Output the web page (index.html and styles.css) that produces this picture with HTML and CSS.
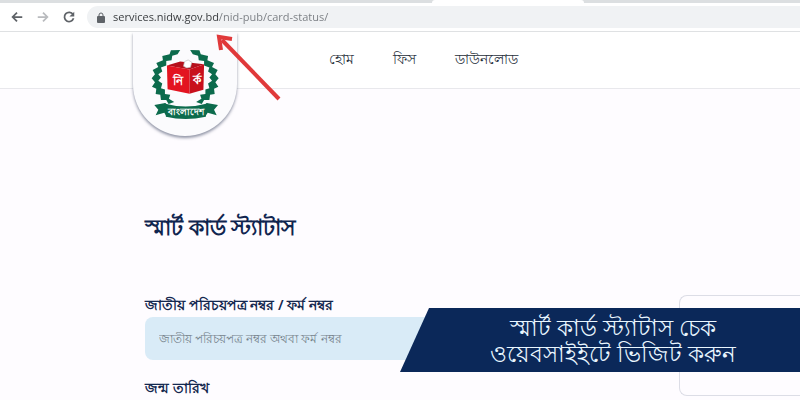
FILE: index.html
```html
<!DOCTYPE html>
<html lang="bn">

<head>
    <meta charset="UTF-8">
    <meta name="viewport" content="width=device-width, initial-scale=1.0">
    <title>স্মার্ট কার্ড স্ট্যাটাস</title>
    <link rel="stylesheet" href="styles.css">
</head>

<body>

    <div class="browser">
        <div class="tab-strip">
            <div class="tab"></div>
        </div>
        <div class="toolbar">
            <button class="tool" type="button" aria-label="Back">
                <svg viewBox="0 0 16 16"><path d="M14 8H3M8 3L3 8l5 5" /></svg>
            </button>
            <button class="tool forward" type="button" aria-label="Forward">
                <svg viewBox="0 0 16 16"><path d="M2 8h11M8 3l5 5-5 5" /></svg>
            </button>
            <button class="tool" type="button" aria-label="Reload">
                <svg viewBox="0 0 16 16"><path d="M12.6 5A5.3 5.3 0 1 0 13.2 9.5" /><path class="solid" d="M14 2v5.500H8.500z" /></svg>
            </button>
            <div class="address">
                <svg class="lock" viewBox="0 0 8 11"><path d="M2 5V3a2 2 0 0 1 4 0v2" /><rect x="0" y="4" width="8" height="7" rx="1" /></svg>
                <input class="url" type="text" aria-label="Address" value="services.nidw.gov.bd/nid-pub/card-status/">
            </div>
        </div>
    </div>

    <header class="header">
        <a class="badge" href="#" aria-label="বাংলাদেশ নির্বাচন কমিশন">
            <svg class="logo" viewBox="92 70 208 212">
                <defs>
                    <path id="laurel" d="M180 75L152 76 148 88 126 93 128 106 108 114 114 126 97 135 104 148 94 160 104 172 95 186 108 192 106 208 120 210 122 226 138 226 145 238 162 232 146 222 150 210 134 208 134 194 122 190 126 176 114 168 122 158 114 148 126 140 122 128 138 122 138 108 154 106 156 92 172 88z" />
                </defs>
                <use href="#laurel" fill="#0c6b4c" />
                <use href="#laurel" fill="#0c6b4c" transform="translate(390 0) scale(-1 1)" />
                <path fill="#b5101b" d="M140 122L180 110 252 118 208 134z" />
                <path fill="#e31420" d="M140 122L208 134V207L142 193z" />
                <path fill="#c8101c" d="M208 134L252 118 250 195 208 207z" />
                <path fill="#fff" stroke="#bbb" stroke-width="2" d="M190 124L193 110 204 105 215 112 211 127 200 129z" />
                <text x="174" y="180" class="logo-text box-text">নি</text>
                <text x="230" y="177" class="logo-text box-text">র্ক</text>
                <path fill="#0c6b4c" d="M102 241L135 235 150 248 140 276 132 264 106 272 114 255zM294 241L260 235 245 248 255 276 263 264 290 272 282 255z" />
                <path fill="#0c6b4c" d="M132 236Q196 254 262 236L257 276Q196 290 137 276z" />
                <text x="197" y="270" class="logo-text ribbon-text">বাংলাদেশ</text>
            </svg>
        </a>
        <nav class="nav">
            <a href="#">হোম</a>
            <a href="#">ফিস</a>
            <a href="#">ডাউনলোড</a>
        </nav>
    </header>

    <main class="content">
        <form class="status-form">
            <h1>স্মার্ট কার্ড স্ট্যাটাস</h1>
            <label for="nid">জাতীয় পরিচয়পত্র নম্বর / ফর্ম নম্বর</label>
            <input id="nid" class="field" type="text" placeholder="জাতীয় পরিচয়পত্র নম্বর অথবা ফর্ম নম্বর">
            <p class="field-title">জন্ম তারিখ</p>
        </form>
        <aside class="card"></aside>
    </main>

    <svg class="arrow" viewBox="0 0 64 66">
        <path d="M61 63L4 4" />
        <path class="head" d="M14 3L1 1 3 14" />
    </svg>

    <div class="banner">স্মার্ট কার্ড স্ট্যাটাস চেক<br>ওয়েবসাইইটে ভিজিট করুন</div>

</body>

</html>
```

FILE: styles.css
```css
* {
    box-sizing: border-box;
}

body {
    margin: 0;
    min-height: 100vh;
    position: relative;
    overflow: hidden;
    font-family: "Noto Sans", "Open Sans", sans-serif;
    background-color: #fefcff;
    color: #14284f;
}

.browser {
    background-color: #fff;
    border-bottom: 1px solid #dfe1e3;
}

.tab-strip {
    height: 3px;
    background-color: #dcdfe1;
}

.tab {
    width: 19%;
    height: 3px;
    margin-left: 54%;
    background-color: #fff;
    border-radius: 3px 3px 0 0;
}

.toolbar {
    display: flex;
    align-items: center;
    gap: 10px;
    height: 28px;
    padding-left: 9px;
}

.tool {
    display: flex;
    width: 16px;
    height: 16px;
    padding: 1px;
    border: none;
    background: none;
}

.tool svg {
    width: 14px;
    height: 14px;
    fill: none;
    stroke: #5f6368;
    stroke-width: 2;
}

.tool .solid {
    fill: #5f6368;
    stroke: none;
}

.forward svg {
    stroke: #b9bbbe;
}

.address {
    flex: 1;
    display: flex;
    align-items: center;
    gap: 8px;
    height: 22px;
    padding-left: 10px;
    border-radius: 11px 0 0 11px;
    background-color: #f0f2f4;
}

.lock {
    width: 8px;
    height: 11px;
    fill: #5f6368;
}

.lock path {
    fill: none;
    stroke: #5f6368;
}

/* host name dark, path grey */
.url {
    flex: 1;
    padding: 0;
    border: none;
    outline: none;
    font-family: "Open Sans", sans-serif;
    font-size: 11px;
    line-height: 18px;
    color: transparent;
    background: linear-gradient(to right, #333639 106px, #777b80 106px);
    -webkit-background-clip: text;
    background-clip: text;
}

.header {
    display: flex;
    align-items: center;
    height: 57px;
    padding-left: 133px;
    background-color: #fff;
    border-bottom: 1px solid #e8e8ec;
}

.badge {
    align-self: flex-start;
    display: flex;
    justify-content: center;
    width: 104px;
    height: 104px;
    padding-top: 16px;
    border-radius: 0 0 52px 52px;
    background-color: #fbfbfd;
    box-shadow: 0 2px 3px rgba(40, 50, 80, 0.5);
    clip-path: inset(0 -8px -8px -8px);
}

.logo {
    width: 69px;
    height: 71px;
}

.logo-text {
    fill: #fff;
    font-weight: bold;
    text-anchor: middle;
}

.box-text {
    font-size: 36px;
}

.ribbon-text {
    font-size: 28px;
}

.nav {
    display: flex;
    gap: 39px;
    margin-left: 92px;
}

.nav a {
    color: #27303b;
    font-size: 14px;
    font-weight: 500;
    text-decoration: none;
}

.content {
    display: flex;
    justify-content: space-between;
    gap: 40px;
    padding-left: 145px;
}

.status-form {
    flex: 1;
    padding-top: 118px;
}

h1 {
    margin: 0 0 48px;
    font-size: 22px;
    line-height: 38px;
    color: #10254f;
}

label,
.field-title {
    display: block;
    margin: 0;
    font-size: 14px;
    font-weight: 600;
    line-height: 24px;
}

.field {
    display: block;
    width: 100%;
    height: 43px;
    margin-bottom: 16px;
    padding: 0 14px;
    border: none;
    border-radius: 8px;
    background-color: #d9ebf7;
    font-family: inherit;
    font-size: 12px;
}

.field::placeholder {
    color: #75828b;
}

.card {
    width: 121px;
    height: 101px;
    margin-top: 206px;
    border: 1px solid #dcdde6;
    border-right: none;
    border-radius: 8px 0 0 8px;
}

.arrow {
    position: absolute;
    top: 36px;
    left: 218px;
    width: 64px;
    height: 66px;
    overflow: visible;
    fill: none;
    stroke: #e0393a;
    stroke-width: 4;
}

.banner {
    position: absolute;
    top: 308px;
    right: 0;
    width: 50%;
    padding: 6px 0 6px 26px;
    background-color: #0b2859;
    clip-path: polygon(29px 0, 100% 0, 100% 100%, 0 100%);
    color: #e9f6ff;
    font-size: 23px;
    line-height: 26px;
    text-align: center;
}
```
